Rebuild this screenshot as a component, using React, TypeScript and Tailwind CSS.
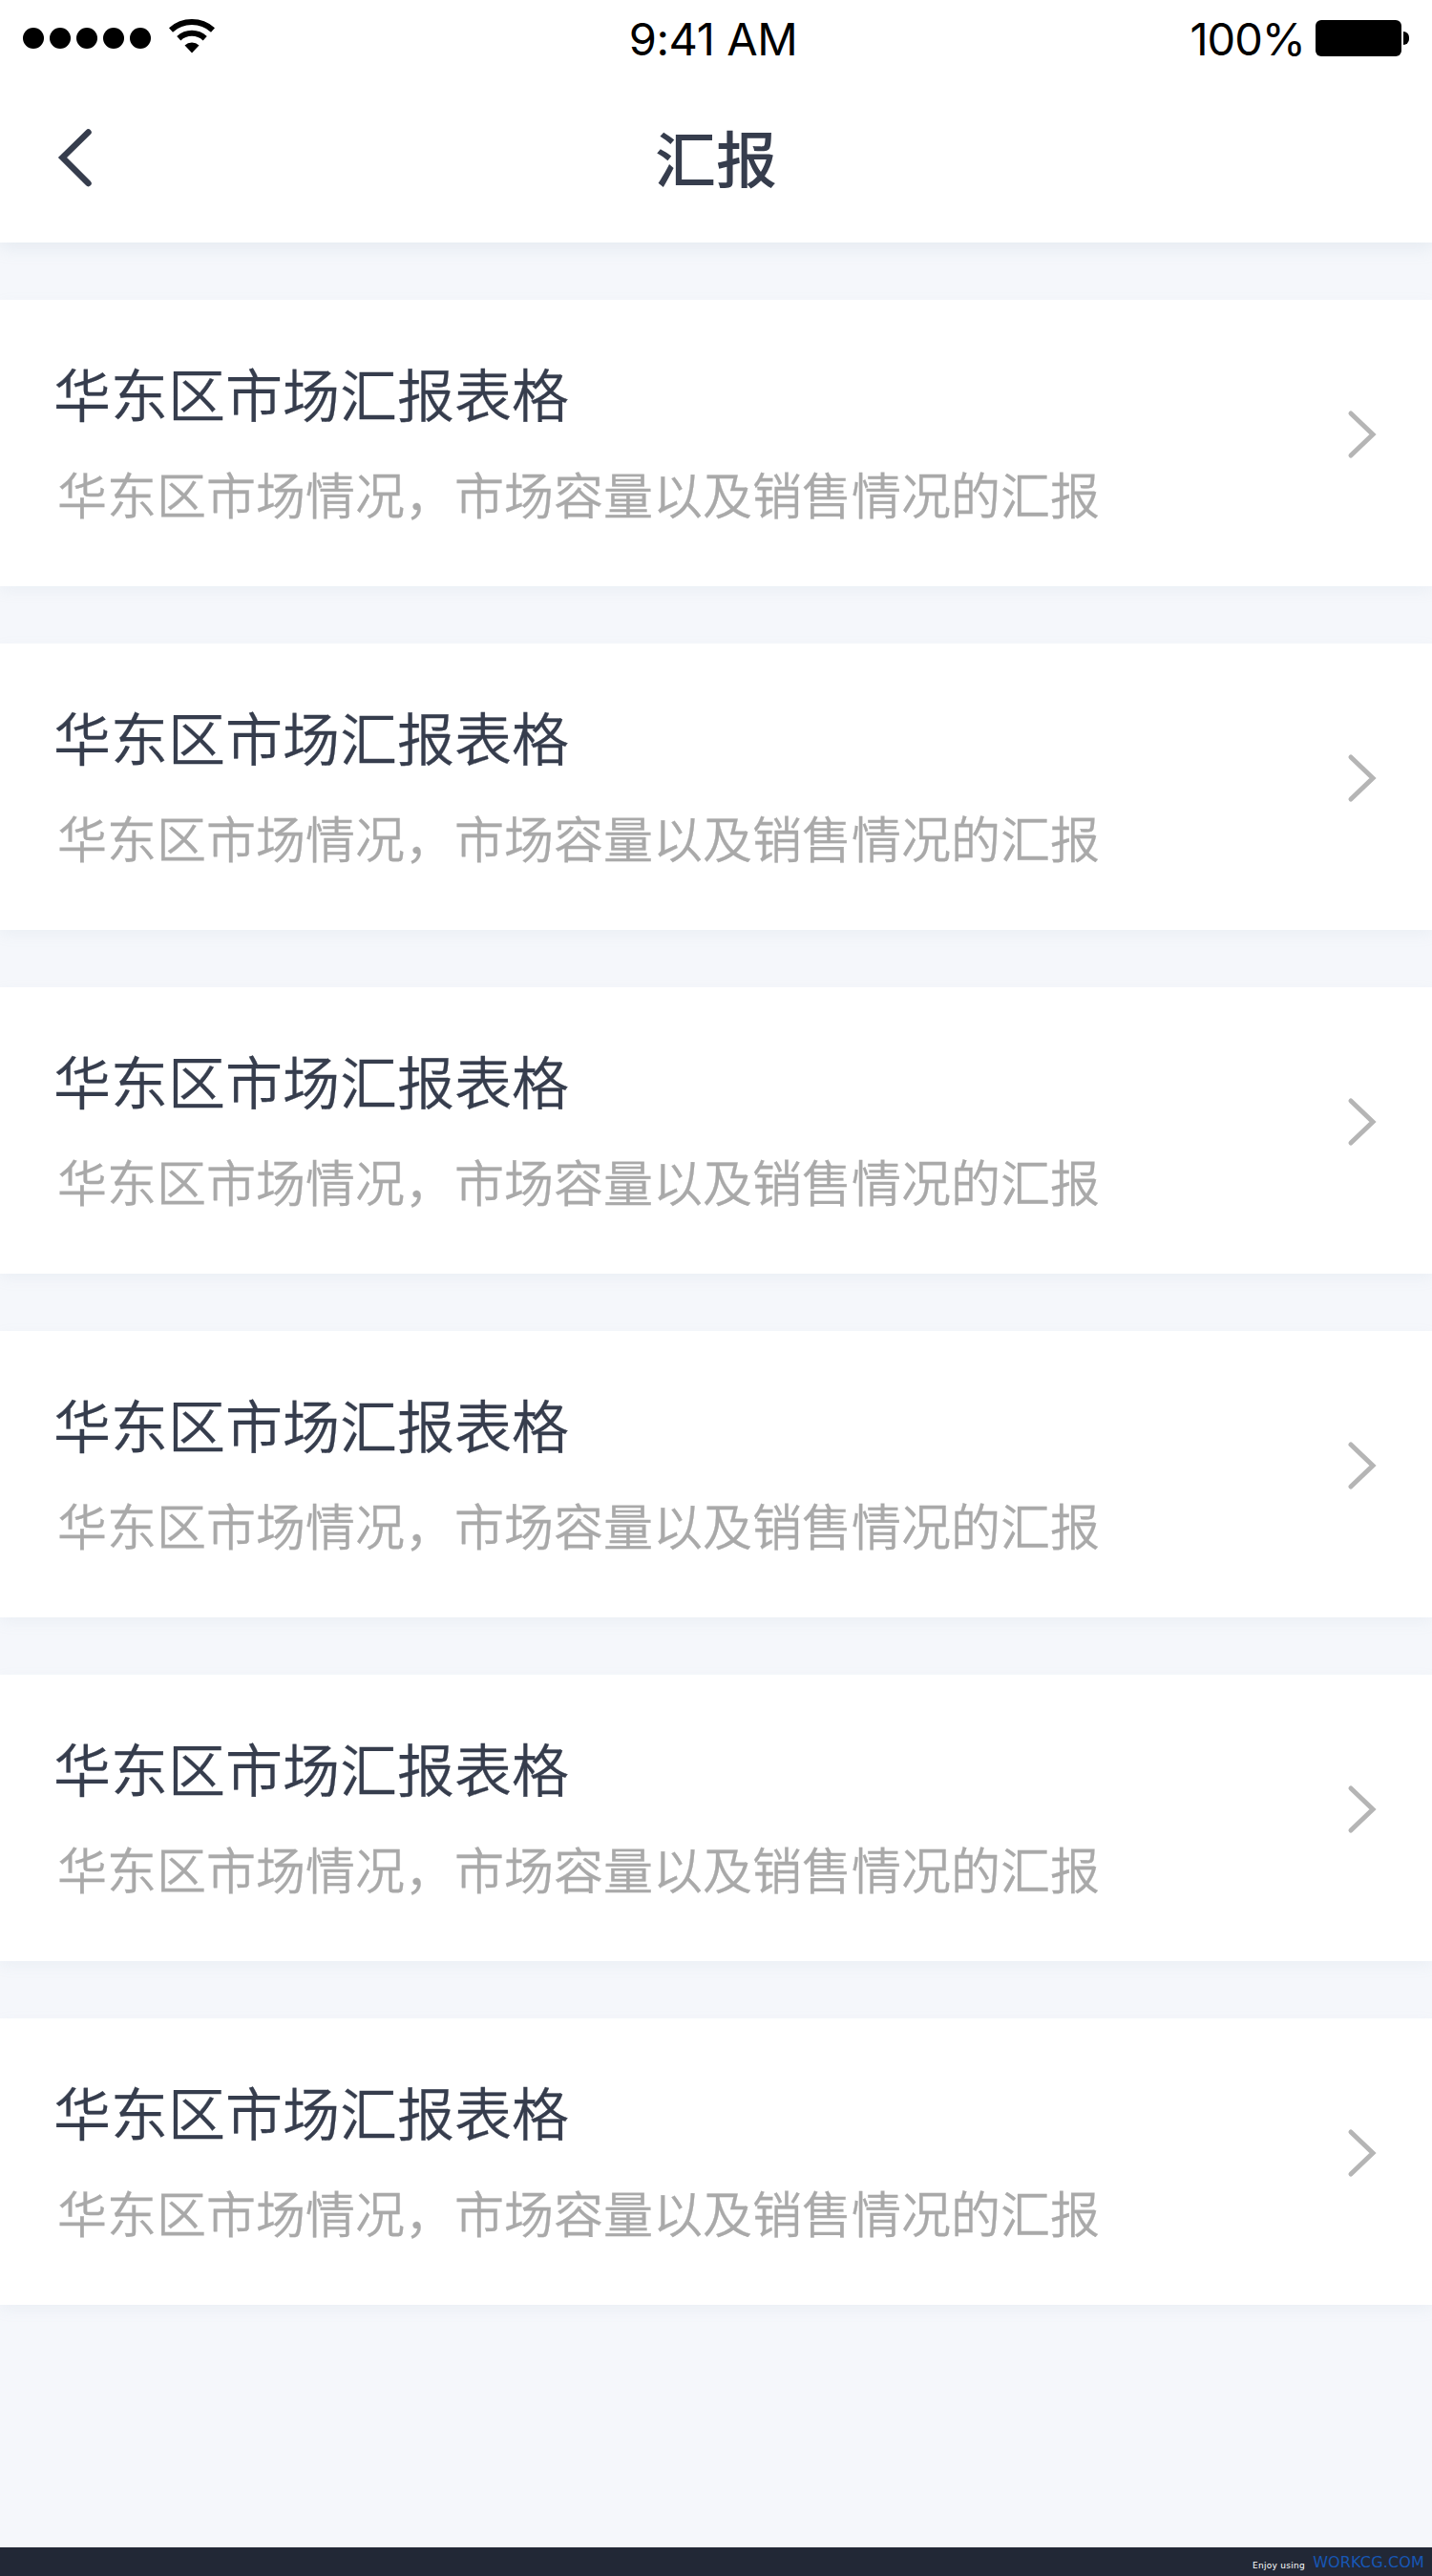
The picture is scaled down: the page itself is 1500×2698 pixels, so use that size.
import React from "react";

const reports = Array.from({ length: 6 }, (_, i) => ({
  id: i + 1,
  title: "华东区市场汇报表格",
  desc: "华东区市场情况，市场容量以及销售情况的汇报",
}));

function WifiIcon() {
  return (
    <svg width="48" height="36" viewBox="0 0 48 36">
      <path d="M2 11.5A33 33 0 0 1 46 11.5" fill="none" stroke="#000" strokeWidth="6" />
      <path d="M10.3 20.3A20 20 0 0 1 37.7 20.3" fill="none" stroke="#000" strokeWidth="6" />
      <path d="M16.5 27.5A11 11 0 0 1 31.5 27.5L24 35.5Z" fill="#000" />
    </svg>
  );
}

function StatusBar() {
  return (
    <div className="grid grid-cols-3 h-[78px] pl-6 pr-6 font-['Inter',sans-serif] text-[47px] leading-[78px] text-black">
      <div className="flex items-center">
        <div className="flex gap-1.5">
          {[0, 1, 2, 3, 4].map((dot) => (
            <span key={dot} className="w-[22px] h-[22px] rounded-full bg-black" />
          ))}
        </div>
        <div className="ml-[19px] pb-[4px]">
          <WifiIcon />
        </div>
      </div>
      <div className="text-center tracking-[-0.4px] pt-[2px] pr-[6px]">9:41 AM</div>
      <div className="flex items-center justify-end">
        <span className="tracking-[-1px] mr-[11px] pt-px">100%</span>
        <span className="w-[90px] h-[38px] rounded-[6px] bg-black" />
        <span className="ml-[2px] w-[6px] h-[14px] rounded-r-full bg-black" />
      </div>
    </div>
  );
}

function Header() {
  return (
    <header className="h-[254px] flex-shrink-0 bg-white shadow-[0_6px_16px_rgba(160,185,200,0.18)]">
      <StatusBar />
      <div className="grid grid-cols-3 items-center h-[176px] pl-[60px] pr-[60px] pb-[2px]">
        <svg width="40" height="64" viewBox="0 0 40 64">
          <path d="M32.5 5.5L5.5 32L32.5 59" fill="none" stroke="#363d4d" strokeWidth="6.5" strokeLinecap="round" />
        </svg>
        <h1 className="text-center text-[64px] leading-[90px] font-medium pb-[4px]">汇报</h1>
      </div>
    </header>
  );
}

function ReportRow({ title, desc }: { title: string; desc: string }) {
  return (
    <li className="flex items-center justify-between h-[300px] pl-[56px] pr-[56px] bg-white shadow-[0_5px_14px_rgba(160,175,200,0.1)]">
      <div className="pb-[6px]">
        <h2 className="text-[60px] leading-[84px] font-[350] [-webkit-text-stroke:0.3px]">{title}</h2>
        <p className="mt-[28px] pl-[4px] text-[52px] leading-[72px] font-[350] [-webkit-text-stroke:0.3px] text-[#a9a9a9]">{desc}</p>
      </div>
      <div className="pb-[18px]">
        <svg width="34" height="54" viewBox="0 0 34 54">
          <path d="M5 5L28 27L5 49" fill="none" stroke="#b5b5b5" strokeWidth="5" strokeLinecap="round" />
        </svg>
      </div>
    </li>
  );
}

export default function App() {
  return (
    <div className="w-[1500px] h-[2698px] flex flex-col overflow-hidden bg-[#f5f7fb] font-['Noto_Sans_CJK_SC',sans-serif] text-[#363d4d]">
      <Header />
      <ul className="flex-1 flex flex-col gap-[60px] pt-[60px]">
        {reports.map((report) => (
          <ReportRow key={report.id} title={report.title} desc={report.desc} />
        ))}
      </ul>
      <footer className="flex justify-end h-[30px] pr-2 bg-[#222836] font-['DejaVu_Sans',sans-serif] leading-[30px]">
        <span className="text-[9px] text-white tracking-[0.3px] mr-[8px] pt-[4px]">Enjoy using</span>
        <span className="text-[16px] text-[#1757b5] tracking-[0.15px] pt-px">WORKCG.COM</span>
      </footer>
    </div>
  );
}
